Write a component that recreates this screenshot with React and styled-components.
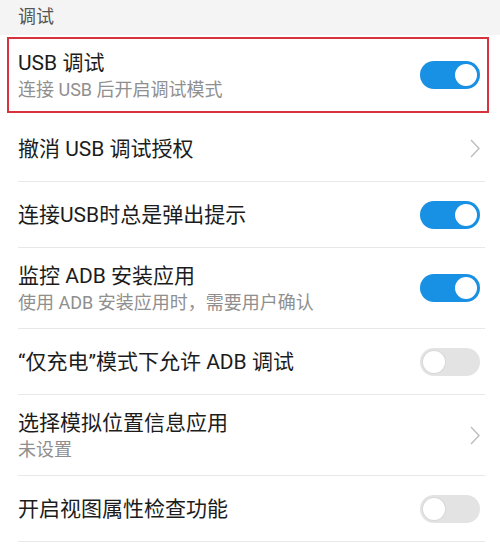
import styled, { createGlobalStyle } from "styled-components";

const GlobalStyle = createGlobalStyle`
  html, body {
    margin: 0;
    padding: 0;
    background: #fff;
  }
  body {
    font-family: Roboto, "Noto Sans CJK SC", sans-serif;
    -webkit-font-smoothing: antialiased;
  }
`;

const items = [
  { title: "USB 调试", sub: "连接 USB 后开启调试模式", type: "toggle", on: true, highlighted: true },
  { title: "撤消 USB 调试授权", type: "arrow" },
  { title: "连接USB时总是弹出提示", type: "toggle", on: true },
  { title: "监控 ADB 安装应用", sub: "使用 ADB 安装应用时，需要用户确认", type: "toggle", on: true },
  { title: "“仅充电”模式下允许 ADB 调试", type: "toggle", on: false },
  { title: "选择模拟位置信息应用", sub: "未设置", type: "arrow" },
  { title: "开启视图属性检查功能", type: "toggle", on: false },
];

const Page = styled.div`
  width: 500px;
  min-height: 550px;
  background: #fff;
`;

const SectionHeader = styled.div`
  height: 35px;
  background: #f4f4f4;
  color: #555;
  font-size: 18px;
  line-height: 33px;
  padding-left: 18px;
  box-sizing: border-box;
`;

const List = styled.div`
  display: flex;
  flex-direction: column;
`;

const Row = styled.div`
  position: relative;
  display: flex;
  align-items: center;
  justify-content: space-between;
  height: ${(p) => (p.$tall ? 81 : 66)}px;
  margin: 0 15px 0 18px;
  padding-right: 5px;
  box-sizing: border-box;
  border-bottom: 1px solid ${(p) => (p.$highlighted ? "transparent" : "#e8e8e8")};

  &::after {
    content: "";
    display: ${(p) => (p.$highlighted ? "block" : "none")};
    position: absolute;
    left: -11px;
    right: -4px;
    top: 2px;
    bottom: 2px;
    border: 2px solid #d8323e;
    pointer-events: none;
  }
`;

const Texts = styled.div`
  display: flex;
  flex-direction: column;
  padding-top: 2px;
`;

const Title = styled.div`
  font-size: 21px;
  line-height: 27px;
  color: #1c1c1c;
`;

const Sub = styled.div`
  font-size: 18px;
  line-height: 25px;
  color: #8f8f8f;
`;

const Track = styled.div`
  position: relative;
  width: 60px;
  height: 28px;
  border-radius: 14px;
  background: ${(p) => (p.$on ? "#1890e4" : "#e3e3e3")};
  flex-shrink: 0;
`;

const Knob = styled.div`
  position: absolute;
  top: 3px;
  left: ${(p) => (p.$on ? "35px" : "3px")};
  width: 22px;
  height: 22px;
  border-radius: 50%;
  background: #fff;
  box-shadow: ${(p) => (p.$on ? "none" : "0 0 0 1px #d8d8d8")};
`;

const Chevron = () => (
  <svg width="10" height="19" viewBox="0 0 10 19" fill="none">
    <path d="M1 1 L9 9.5 L1 18" stroke="#bdbdbd" strokeWidth="1.4" />
  </svg>
);

const Toggle = ({ on }) => (
  <Track $on={on}>
    <Knob $on={on} />
  </Track>
);

export default function App() {
  return (
    <Page>
      <GlobalStyle />
      <SectionHeader>调试</SectionHeader>
      <List>
        {items.map((it) => (
          <Row key={it.title} $tall={!!it.sub} $highlighted={it.highlighted}>
            <Texts>
              <Title>{it.title}</Title>
              {it.sub && <Sub>{it.sub}</Sub>}
            </Texts>
            {it.type === "toggle" ? <Toggle on={it.on} /> : <Chevron />}
          </Row>
        ))}
      </List>
    </Page>
  );
}
